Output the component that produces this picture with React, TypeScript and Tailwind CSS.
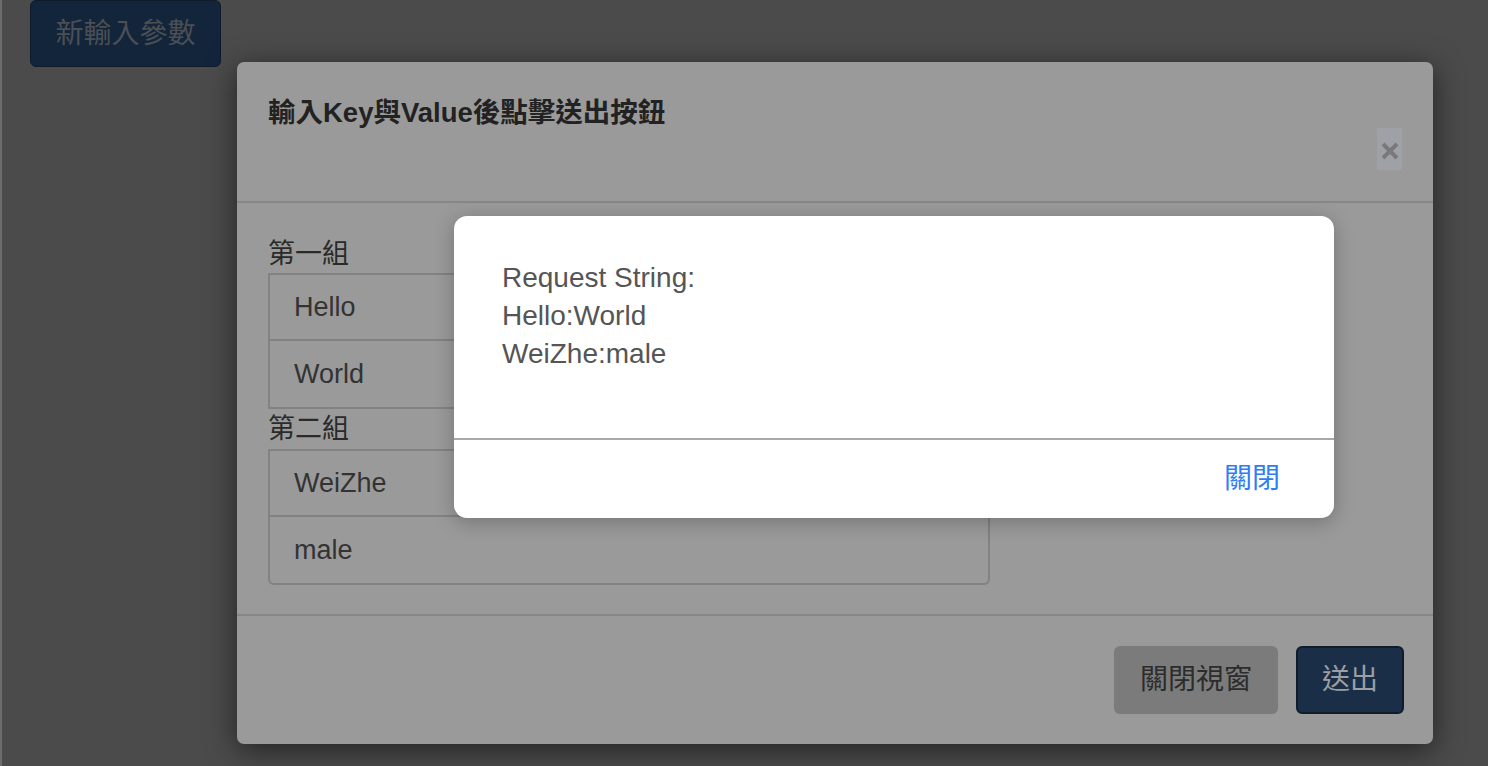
import React from "react";

const font = { fontFamily: '"Liberation Sans", "Noto Sans CJK TC", sans-serif' };

export default function App() {
  return (
    <div
      className="relative w-[1488px] h-[766px] overflow-hidden bg-[#4b4b4b] border-l-[2px] border-[#6e6e6e]"
      style={font}
    >
      {/* page content under overlay */}
      <div className="pl-[28px]">
        <button className="w-[191px] h-[67px] rounded-[6px] bg-[#13253a] border border-[#0e1b2b] text-[28px] text-[#4b4f55] flex items-center justify-center">
          新輸入參數
        </button>
      </div>

      {/* main modal */}
      <div className="absolute left-[235px] top-[62px] w-[1196px] h-[682px] rounded-[7px] bg-[#9a9a9a] shadow-[0_6px_30px_rgba(0,0,0,0.55)] flex flex-col">
        <div className="h-[141px] px-[31px] flex justify-between items-start border-b-[2px] [border-bottom-color:#878787]">
          <h2 className="mt-[34px] text-[27.5px] leading-[34px] font-bold text-[#222]">
            輸入Key與Value後點擊送出按鈕
          </h2>
          <button className="mt-[66px] w-[25px] h-[42px] bg-[#9ea2a7] flex items-center justify-center">
            <svg width="20" height="20" viewBox="0 0 20 20" className="mt-[4px]">
              <path d="M3 3 L17 17 M17 3 L3 17" stroke="#797979" strokeWidth="4" strokeLinecap="butt" />
            </svg>
          </button>
        </div>
        <div className="px-[31px] pt-[33px] pb-[29px] flex flex-col text-[27px] text-[#2a2a2a]">
          <div className="h-[36px] leading-[36px] mb-[1px]">第一組</div>
          <div className="w-[722px] h-[68px] border-[2px] [border-color:#828282] flex items-center pl-[24px] text-[#333]">Hello</div>
          <div className="w-[722px] h-[68px] border-[2px] border-t-0 [border-color:#828282] flex items-center pl-[24px] text-[#333]">World</div>
          <div className="h-[40px] leading-[40px]">第二組</div>
          <div className="w-[722px] h-[68px] border-[2px] [border-color:#828282] flex items-center pl-[24px] text-[#333]">WeiZhe</div>
          <div className="w-[722px] h-[68px] border-[2px] border-t-0 [border-color:#828282] rounded-b-[6px] flex items-center pl-[24px] text-[#333]">male</div>
        </div>
        <div className="flex-1 border-t-[2px] [border-top-color:#878787] flex justify-end items-start pt-[30px] pr-[29px] gap-[18px]">
          <button className="w-[164px] h-[68px] rounded-[6px] bg-[#7b7b7b] text-[28px] text-[#2c2c2c]">
            關閉視窗
          </button>
          <button className="w-[108px] h-[68px] rounded-[6px] bg-[#1a2e47] border-[2px] border-[#0f1c2c] text-[28px] text-[#9b9fa4]">
            送出
          </button>
        </div>
      </div>

      {/* alert dialog */}
      <div className="absolute left-[452px] top-[216px] w-[880px] h-[302px] rounded-[13px] bg-white shadow-[0_4px_20px_rgba(0,0,0,0.25)] flex flex-col overflow-hidden">
        <div className="h-[222px] px-[48px] pt-[43px] text-[28px] leading-[38px] text-[#555]">
          <div>Request String:</div>
          <div>Hello:World</div>
          <div>WeiZhe:male</div>
        </div>
        <div className="flex-1 border-t-[2px] border-[#a9a9a9] flex items-center justify-end pr-[54px]">
          <span className="text-[28px] text-[#2f7df6]">關閉</span>
        </div>
      </div>
    </div>
  );
}
